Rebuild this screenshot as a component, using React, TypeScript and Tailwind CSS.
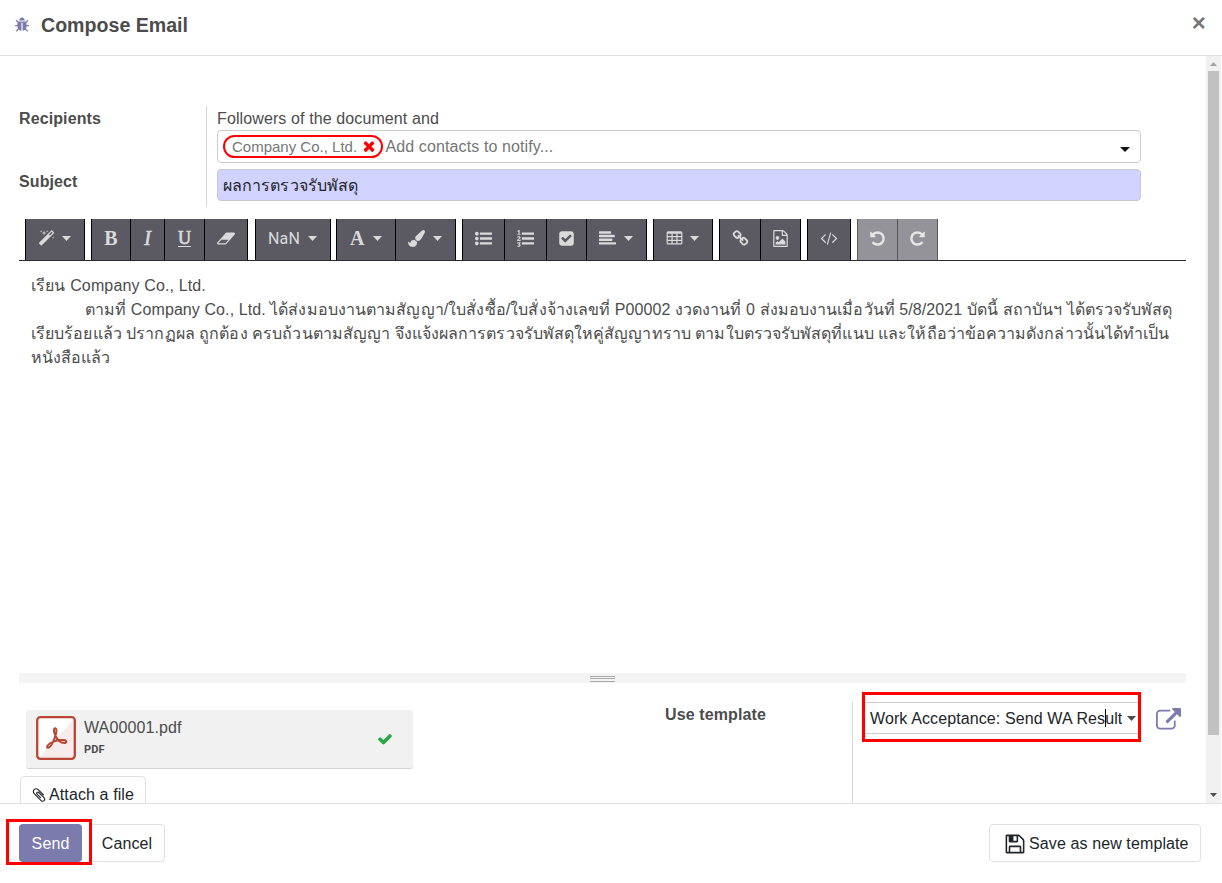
import type { ReactNode } from "react";

const PATHS = {
  bug: "M1696 960q0 26-19 45t-45 19h-224q0 171-67 290l208 209q19 19 19 45t-19 45q-18 19-45 19t-45-19l-198-197q-5 5-15 13t-42 28.5-65 36.5-82 29-97 13v-896h-128v896q-51 0-101.5-13.5t-87-33-66-39-43.5-32.5l-15-14-183 207q-20 21-48 21-24 0-43-16-19-18-20.5-44.5t15.5-46.5l202-227q-58-114-58-274h-224q-26 0-45-19t-19-45 19-45 45-19h224v-294l-173-173q-19-19-19-45t19-45 45-19 45 19l173 173h844l173-173q19-19 45-19t45 19 19 45-19 45l-173 173v294h224q26 0 45 19t19 45zm-480-576h-640q0-133 93.5-226.5t226.5-93.5 226.5 93.5 93.5 226.5z",
  magic: "M1254 581l293-293-107-107-293 293zm447-293q0 27-18 45l-1286 1286q-18 18-45 18t-45-18l-198-198q-18-18-18-45t18-45l1286-1286q18-18 45-18t45 18l198 198q18 18 18 45zm-1351-190l98 30-98 30-30 98-30-98-98-30 98-30 30-98zm350 162l196 60-196 60-60 196-60-196-196-60 196-60 60-196zm930 478l98 30-98 30-30 98-30-98-98-30 98-30 30-98zm-640-640l98 30-98 30-30 98-30-98-98-30 98-30 30-98z",
  eraser: "M896 1408l336-384h-768l-336 384h768zm1013-1077q15 34 9.5 71.5t-30.5 65.5l-896 1024q-38 44-96 44h-768q-38 0-69.5-20.5t-47.5-54.5q-15-34-9.5-71.5t30.5-65.5l896-1024q38-44 96-44h768q38 0 69.5 20.5t47.5 54.5z",
  brush: "M1615 0q70 0 122.5 46.5t52.5 116.5q0 63-45 151-332 629-465 752-97 91-218 91-126 0-216.5-92.5t-90.5-219.5q0-128 92-212l638-579q59-54 130-54zm-909 1034q39 76 106.5 130t150.5 76l1 71q4 213-129.5 347t-348.5 134q-123 0-218-46.5t-152.5-127.5-86.5-183-29-220q7 5 41 30t62 44.5 59 36.5 46 17q41 0 55-37 25-66 57.5-112.5t69.5-76 88-47.5 103-25.5 125-10.5z",
  listUl: "M384 1408q0 80-56 136t-136 56-136-56-56-136 56-136 136-56 136 56 56 136zm0-512q0 80-56 136t-136 56-136-56-56-136 56-136 136-56 136 56 56 136zm1408 416v192q0 13-9.5 22.5t-22.5 9.5h-1216q-13 0-22.5-9.5t-9.5-22.5v-192q0-13 9.5-22.5t22.5-9.5h1216q13 0 22.5 9.5t9.5 22.5zm-1408-928q0 80-56 136t-136 56-136-56-56-136 56-136 136-56 136 56 56 136zm1408 416v192q0 13-9.5 22.5t-22.5 9.5h-1216q-13 0-22.5-9.5t-9.5-22.5v-192q0-13 9.5-22.5t22.5-9.5h1216q13 0 22.5 9.5t9.5 22.5zm0-512v192q0 13-9.5 22.5t-22.5 9.5h-1216q-13 0-22.5-9.5t-9.5-22.5v-192q0-13 9.5-22.5t22.5-9.5h1216q13 0 22.5 9.5t9.5 22.5z",
  listOl: "M381 1620q0 80-54.5 126t-135.5 46q-106 0-172-66l57-88q49 45 106 45 29 0 50.5-14.5t21.5-42.5q0-64-105-56l-26-56q8-10 32.5-43.5t42.5-54 37-38.5v-1q-16 0-48.5 1t-48.5 1v53h-106v-152h333v88l-95 115q51 12 81 49t30 88zm2-627v159h-362q-6-36-6-54 0-51 23.5-93t56.5-68 66-47.5 56.5-43.5 23.5-45q0-25-14.5-38.5t-39.5-13.5q-46 0-81 58l-85-59q24-51 71.5-79.5t105.5-28.5q73 0 123 41.5t50 112.5q0 50-34 91.5t-75 64.5-75.5 50.5-35.5 52.5h127v-60h105zm1409 319v192q0 13-9.5 22.5t-22.5 9.5h-1216q-13 0-22.5-9.5t-9.5-22.5v-192q0-14 9-23t23-9h1216q13 0 22.5 9.5t9.5 22.5zm-1408-899v99h-335v-99h107q0-41 .5-121.5t.5-121.5v-12h-2q-8 17-50 54l-71-76 136-127h106v404h108zm1408 387v192q0 13-9.5 22.5t-22.5 9.5h-1216q-13 0-22.5-9.5t-9.5-22.5v-192q0-14 9-23t23-9h1216q13 0 22.5 9.5t9.5 22.5zm0-512v192q0 13-9.5 22.5t-22.5 9.5h-1216q-13 0-22.5-9.5t-9.5-22.5v-192q0-13 9.5-22.5t22.5-9.5h1216q13 0 22.5 9.5t9.5 22.5z",
  checkSquare: "M813 1299l614-614q19-19 19-45t-19-45l-102-102q-19-19-45-19t-45 19l-467 467-211-211q-19-19-45-19t-45 19l-102 102q-19 19-19 45t19 45l358 358q19 19 45 19t45-19zm851-883v960q0 119-84.5 203.5t-203.5 84.5h-960q-119 0-203.5-84.5t-84.5-203.5v-960q0-119 84.5-203.5t203.5-84.5h960q119 0 203.5 84.5t84.5 203.5z",
  alignLeft: "M1792 1344v128q0 26-19 45t-45 19h-1664q-26 0-45-19t-19-45v-128q0-26 19-45t45-19h1664q26 0 45 19t19 45zm-384-384v128q0 26-19 45t-45 19h-1280q-26 0-45-19t-19-45v-128q0-26 19-45t45-19h1280q26 0 45 19t19 45zm256-384v128q0 26-19 45t-45 19h-1536q-26 0-45-19t-19-45v-128q0-26 19-45t45-19h1536q26 0 45 19t19 45zm-384-384v128q0 26-19 45t-45 19h-1152q-26 0-45-19t-19-45v-128q0-26 19-45t45-19h1152q26 0 45 19t19 45z",
  table: "M224 128h1344q160 0 160 160v1088q0 160-160 160h-1344q-160 0-160-160v-1088q0-160 160-160zM192 384v256h384v-256zM704 384v256h384v-256zM1216 384v256h384v-256zM192 768v256h384v-256zM704 768v256h384v-256zM1216 768v256h384v-256zM192 1152v256h384v-256zM704 1152v256h384v-256zM1216 1152v256h384v-256z",
  link: "M1520 1216q0-40-28-68l-208-208q-28-28-68-28-42 0-72 32 3 3 19 18.5t21.5 21.5 15 19 13 25.5 3.5 27.5q0 40-28 68t-68 28q-15 0-27.5-3.5t-25.5-13-19-15-21.5-21.5-18.5-19q-33 31-33 73 0 40 28 68l206 207q27 27 68 27 40 0 68-26l147-146q28-28 28-67zm-703-705q0-40-28-68l-206-207q-28-28-68-28-39 0-68 27l-147 146q-28 28-28 67 0 40 28 68l208 208q27 27 68 27 42 0 72-31-3-3-19-18.5t-21.5-21.5-15-19-13-25.5-3.5-27.5q0-40 28-68t68-28q15 0 27.5 3.5t25.5 13 19 15 21.5 21.5 18.5 19q33-31 33-73zm895 705q0 120-85 203l-147 146q-83 83-203 83-121 0-204-85l-206-207q-83-83-83-203 0-123 88-209l-88-88q-86 88-208 88-120 0-204-84l-208-208q-84-84-84-204t85-203l147-146q83-83 203-83 121 0 204 85l206 207q83 83 83 203 0 123-88 209l88 88q86-88 208-88 120 0 204 84l208 208q84 84 84 204z",
  fileImage: "M1596 380q28 28 48 76t20 88v1152q0 40-28 68t-68 28h-1344q-40 0-68-28t-28-68v-1600q0-40 28-68t68-28h896q40 0 88 20t76 48zm-444-244v376h376q-10-29-22-41l-313-313q-12-12-41-22zm384 1528v-1024h-416q-40 0-68-28t-28-68v-416h-768v1536h1280zm-128-448v320h-1024v-192l192-192 128 128 384-384zm-832-192q-80 0-136-56t-56-136 56-136 136-56 136 56 56 136-56 136-136 56z",
  code: "M617 1399l-50 50q-10 10-23 10t-23-10l-466-466q-10-10-10-23t10-23l466-466q10-10 23-10t23 10l50 50q10 10 10 23t-10 23l-393 393 393 393q10 10 10 23t-10 23zm591-1067l-373 1291q-4 13-15.5 19.5t-23.5 2.5l-62-17q-13-4-19.5-15.5t-2.5-24.5l373-1291q4-13 15.5-19.5t23.5-2.5l62 17q13 4 19.5 15.5t2.5 24.5zm657 651l-466 466q-10 10-23 10t-23-10l-50-50q-10-10-10-23t10-23l393-393-393-393q-10-10-10-23t10-23l50-50q10-10 23-10t23 10l466 466q10 10 10 23t-10 23z",
  undo: "M1664 896q0 156-61 298t-164 245-245 164-298 61q-172 0-327-72.5t-264-204.5q-7-10-6.5-22.5t8.5-20.5l137-138q10-9 25-9 16 2 23 12 73 95 179 147t225 52q104 0 198.5-40.5t163.5-109.5 109.5-163.5 40.5-198.5-40.5-198.5-109.5-163.5-163.5-109.5-198.5-40.5q-98 0-188 35.5t-160 101.5l137 138q31 30 14 69-17 40-59 40h-448q-26 0-45-19t-19-45v-448q0-42 40-59 39-17 69 14l130 129q107-101 244.5-156.5t284.5-55.5q156 0 298 61t245 164 164 245 61 298z",
  save: "M512 1536h768v-384h-768v384zm896 0h128v-896q0-14-10-38.5t-20-34.5l-281-281q-10-10-34-20t-39-10v416q0 40-28 68t-68 28h-576q-40 0-68-28t-28-68v-416h-128v1280h128v-416q0-40 28-68t68-28h832q40 0 68 28t28 68v416zm-384-928v-320q0-13-9.5-22.5t-22.5-9.5h-192q-13 0-22.5 9.5t-9.5 22.5v320q0 13 9.5 22.5t22.5 9.5h192q13 0 22.5-9.5t9.5-22.5zm640 32v928q0 40-28 68t-68 28h-1344q-40 0-68-28t-28-68v-1344q0-40 28-68t68-28h928q40 0 88 20t76 48l280 280q28 28 48 76t20 88z",
  paperclip: "M1596 1385q0 117-79 196t-196 79q-135 0-235-100l-777-776q-113-115-113-271 0-159 110-270t269-111q158 0 273 113l605 606q10 10 10 22 0 16-30.5 46.5t-46.5 30.5q-13 0-23-10l-606-607q-79-77-181-77-106 0-179 75t-73 181q0 105 76 181l776 777q63 63 145 63 64 0 106-42t42-106q0-82-63-145l-581-581q-26-24-60-24-29 0-48 19t-19 48q0 32 25 59l410 410q10 10 10 22 0 16-31 47t-47 31q-12 0-22-10l-410-410q-63-61-63-149 0-82 57-139t139-57q88 0 149 63l581 581q100 98 100 235z",
  check: "M1671 566q0 40-28 68l-724 724-136 136q-28 28-68 28t-68-28l-136-136-362-362q-28-28-28-68t28-68l136-136q28-28 68-28t68 28l294 295 656-657q28-28 68-28t68 28l136 136q28 28 28 68z",
  times: "M1490 1322q0 40-28 68l-136 136q-28 28-68 28t-68-28l-294-294-294 294q-28 28-68 28t-68-28l-136-136q-28-28-28-68t28-68l294-294-294-294q-28-28-28-68t28-68l136-136q28-28 68-28t68 28l294 294 294-294q28-28 68-28t68 28l136 136q28 28 28 68t-28 68l-294 294 294 294q28 28 28 68z",
  external: "M1408 928v320q0 119-84.5 203.5t-203.5 84.5h-832q-119 0-203.5-84.5t-84.5-203.5v-832q0-119 84.5-203.5t203.5-84.5h704q14 0 23 9t9 23v64q0 14-9 23t-23 9h-704q-66 0-113 47t-47 113v832q0 66 47 113t113 47h832q66 0 113-47t47-113v-320q0-14 9-23t23-9h64q14 0 23 9t9 23zm384-864v512q0 26-19 45t-45 19-45-19l-176-176-652 652q-10 10-23 10t-23-10l-114-114q-10-10-10-23t10-23l652-652-176-176q-19-19-19-45t19-45 45-19h512q26 0 45 19t19 45z",
};

function Icon({ name, className = "size-4", wide = false }: { name: keyof typeof PATHS; className?: string; wide?: boolean }) {
  return (
    <svg viewBox={wide ? "0 0 1920 1792" : "0 0 1792 1792"} className={`shrink-0 ${className}`} fill="currentColor" fillRule={name === "table" ? "evenodd" : "nonzero"}>
      <path d={PATHS[name]} />
    </svg>
  );
}

function Caret({ className = "h-[5px] w-[9px]" }: { className?: string }) {
  return (
    <svg viewBox="0 0 10 5" preserveAspectRatio="none" className={`shrink-0 ${className}`} fill="currentColor">
      <path d="M0 0h10L5 5z" />
    </svg>
  );
}

function Group({ children, className = "" }: { children: ReactNode; className?: string }) {
  return <div className={`flex h-full border-r border-black ${className}`}>{children}</div>;
}

function Tool({ children, className }: { children: ReactNode; className: string }) {
  return (
    <button className={`flex h-full items-center border-l border-black bg-[#5b5a63] pb-[3px] text-[#dadada] ${className}`}>
      {children}
    </button>
  );
}

function Toolbar() {
  return (
    <div className="mt-3 ml-[19px] flex h-[42px] w-[1167px] border-b border-[#2b2a33] pl-[6px] tracking-normal">
      <Group className="mr-[6px]">
        <Tool className="w-[59px] gap-[7px] pl-3"><Icon name="magic" className="size-[17px]" /><Caret /></Tool>
      </Group>
      <Group className="mr-[7px] font-['Liberation_Serif',serif] text-[20px] leading-5">
        <Tool className="w-[39px] justify-center font-bold">B</Tool>
        <Tool className="w-[34px] justify-center italic [-webkit-text-stroke:0.6px_currentColor]">I</Tool>
        <Tool className="w-[40px] justify-center"><span className="mt-px border-b border-current text-[18px] leading-[15px] [-webkit-text-stroke:0.7px_currentColor]">U</span></Tool>
        <Tool className="w-[43px] justify-center"><Icon name="eraser" wide className="h-[17px] w-[18px]" /></Tool>
      </Group>
      <Group className="mr-[5px]">
        <Tool className="w-[75px] gap-[8px] pl-3"><span className="mt-[2px] font-['Roboto',sans-serif] text-[16px] tracking-[0.2px]">NaN</span><Caret /></Tool>
      </Group>
      <Group className="mr-[6px]">
        <Tool className="w-[59px] gap-[9px] pl-[13px]"><span className="font-['Liberation_Serif',serif] text-[20px] leading-5 font-bold">A</span><Caret /></Tool>
        <Tool className="w-[60px] gap-[8px] pl-3"><Icon name="brush" className="size-[17px]" /><Caret /></Tool>
      </Group>
      <Group className="mr-[6px]">
        <Tool className="w-[42px] justify-center"><Icon name="listUl" className="size-[17px]" /></Tool>
        <Tool className="w-[42px] justify-center"><Icon name="listOl" className="size-[17px]" /></Tool>
        <Tool className="w-[40px] justify-center"><Icon name="checkSquare" className="size-[17px]" /></Tool>
        <Tool className="w-[60px] gap-[8px] pl-3"><Icon name="alignLeft" className="size-[17px]" /><Caret /></Tool>
      </Group>
      <Group className="mr-[6px]">
        <Tool className="w-[59px] gap-[7px] pl-3"><Icon name="table" className="size-[17px]" /><Caret /></Tool>
      </Group>
      <Group className="mr-[6px]">
        <Tool className="w-[41px] justify-center"><Icon name="link" className="size-[17px]" /></Tool>
        <Tool className="w-[40px] justify-center"><Icon name="fileImage" className="size-[17px]" /></Tool>
      </Group>
      <Group className="mr-[6px]">
        <Tool className="w-[43px] justify-center"><Icon name="code" wide className="h-[16px] w-[18px]" /></Tool>
      </Group>
      <Group className="opacity-65">
        <Tool className="w-[40px] justify-center"><Icon name="undo" className="size-[17px]" /></Tool>
        <Tool className="w-[40px] justify-center"><Icon name="undo" className="size-[17px] -scale-x-100" /></Tool>
      </Group>
    </div>
  );
}

function Recipients() {
  return (
    <section className="flex pt-[50px] pl-[19px]">
      <div className="flex h-[101px] w-[188px] flex-col border-r border-[#d9d9d9] font-bold">
        <span className="mt-[1px] h-[63px]">Recipients</span>
        <span>Subject</span>
      </div>
      <div className="ml-[10px] w-[924px]">
        <div className="h-6 pt-px">Followers of the document and</div>
        <div className="flex h-[33px] items-center rounded-[4px] border border-[#ccc] pl-[5px]">
          <div className="flex h-[23px] w-[160px] items-center rounded-full border-2 border-[#f00] pl-[7px] text-[15px] tracking-normal text-[#777]">
            <span>Company Co., Ltd.</span>
            <Icon name="times" className="mb-px ml-[4px] size-[16px] text-[#f00]" />
          </div>
          <span className="ml-[2.5px] text-[#757575]">Add contacts to notify...</span>
          <Caret className="mt-[6px] mr-[10px] ml-auto h-[5px] w-[10px] text-[#111]" />
        </div>
        <div className="mt-[6px] flex h-8 items-center rounded-[4px] border border-[#c8c8d0] bg-[#d2d2ff] pt-[2px] pl-[5px] tracking-[0.08px] text-[#212529]">ผลการตรวจรับพัสดุ</div>
      </div>
    </section>
  );
}

function Message() {
  return (
    <div className="ml-[31px] h-[412px] pt-[13px] whitespace-nowrap">
      <p className="tracking-[0.14px]">เรียน Company Co., Ltd.</p>
      <p className="pl-[54px] tracking-[0.085px]">ตามที่ Company Co., Ltd. ได้ส่งมอบงานตามสัญญา/ใบสั่งซื้อ/ใบสั่งจ้างเลขที่ P00002 งวดงานที่ 0 ส่งมอบงานเมื่อวันที่ 5/8/2021 บัดนี้ สถาบันฯ ได้ตรวจรับพัสดุ</p>
      <p className="tracking-[0.073px]">เรียบร้อยแล้ว ปรากฏผล ถูกต้อง ครบถ้วนตามสัญญา จึงแจ้งผลการตรวจรับพัสดุใหคู่สัญญาทราบ ตามใบตรวจรับพัสดุที่แนบ และให้ถือว่าข้อความดังกล่าวนั้นได้ทำเป็น</p>
      <p className="tracking-[0.06px]">หนังสือแล้ว</p>
    </div>
  );
}

function PdfIcon() {
  return (
    <svg viewBox="0 0 40 44" className="h-[44px] w-[40px]">
      <rect x="1.2" y="1.2" width="37.6" height="41.6" rx="3" fill="#fff" />
      <path d="M38 3v39H3z" fill="#f7eceb" />
      <rect x="1.2" y="1.2" width="37.6" height="41.6" rx="3.2" fill="none" stroke="#b94534" strokeWidth="2.3" />
      <path d="M19.2 12.3c-2 0-1.5 4 .2 7.5 2 4.2 5.4 7.2 8.800 7.200 2.800 0 2.800-2.600-.5-2.900-4.500-.4-9.500.7-13.200 2.900-3.300 2-4.300 4.700-2.700 4.800 2.200 0 5.200-5.500 6.800-9.700 1.700-4.300 2.800-9.800.6-9.800z" fill="none" stroke="#b94534" strokeWidth="2" />
    </svg>
  );
}

function Bottom() {
  return (
    <section className="flex">
      <div className="w-[665px] pt-[27px] pl-[20px]">
        <div className="ml-[6px] flex h-[59px] w-[387px] rounded-[3px] border-b border-[#d3d3d3] bg-[#f1f1f1] pt-[6px] pl-[10px]">
          <PdfIcon />
          <div className="ml-2 flex w-[286px] flex-col">
            <span className="h-[25px] pt-px leading-[22px]">WA00001.pdf</span>
            <span className="font-['Roboto',sans-serif] text-[11px] leading-[18px] font-bold">PDF</span>
          </div>
          <Icon name="check" className="mt-[15px] ml-[7px] size-4 text-[#28a745]" />
        </div>
        <button className="mt-[7px] flex h-[38px] w-[126px] items-center rounded-[4px] border border-[#dee2e6] pl-[10px] text-[#212529]">
          <Icon name="paperclip" className="mr-[2px] mb-px size-4" />Attach a file
        </button>
      </div>
      <div className="mt-[19px] h-[140px] w-[188px] border-r border-[#d9d9d9] pt-px font-bold">Use template</div>
      <div className="relative mt-[19px] ml-[10px] flex h-8 w-[278px] items-center border-y border-[#ccc] pl-[7px] text-[#212529]">
        <span className="mt-[2px] w-[252px] overflow-hidden whitespace-nowrap">Work Acceptance: Send WA Result</span>
        <Caret className="ml-[5px] h-[5px] w-[9px] text-[#4c4c4c]" />
        <span className="absolute top-[6px] left-[242px] h-[18px] w-px bg-black" />
        <span className="absolute -top-[11px] -left-px h-[50px] w-[279px] border-[3px] border-[#f00]" />
      </div>
      <Icon name="external" className="mt-[25px] ml-[15px] size-[25px] text-[#7c7bad]" />
    </section>
  );
}

function Scrollbar() {
  return (
    <div className="mr-px flex w-[15px] flex-col items-center bg-[#f1f1f1]">
      <div className="flex h-[15px] items-center"><Caret className="h-[4px] w-[7px] rotate-180 text-[#a3a3a3]" /></div>
      <div className="h-[664px] w-[11px] bg-[#c1c1c1]" />
      <div className="mt-auto flex h-[17px] items-center"><Caret className="h-[4px] w-[7px] text-[#505050]" /></div>
    </div>
  );
}

export default function App() {
  return (
    <div className="flex h-[883px] w-[1222px] flex-col overflow-hidden bg-white font-['Liberation_Sans',sans-serif] text-[16px] leading-6 tracking-[0.11px] text-[#4c4c4c]">
      <header className="flex h-14 shrink-0 items-center border-b border-[#dee2e6] pb-[6px] pl-[13.5px]">
        <Icon name="bug" className="size-[16px] text-[#7c7bad]" />
        <h1 className="ml-[11.5px] text-[19.6px] font-bold tracking-normal">Compose Email</h1>
        <button className="mr-[16px] mb-[3px] ml-auto text-[24px] font-bold text-[#777]">×</button>
      </header>
      <main className="flex h-[747px] shrink-0 overflow-hidden">
        <div className="w-[1206px] shrink-0">
          <Recipients />
          <Toolbar />
          <Message />
          <div className="ml-[19px] flex h-[10px] w-[1167px] flex-col items-center bg-[#f4f4f4] pt-[3px]">
            <div className="h-[3px] w-[25px] border-y border-[#a9a9a9]" />
            <div className="mt-[2px] h-px w-[25px] bg-[#a9a9a9]" />
          </div>
          <Bottom />
        </div>
        <Scrollbar />
      </main>
      <footer className="relative flex grow items-start border-t border-[#dee2e6] pt-5 pr-[21px] pl-[19px] text-[#212529]">
        <button className="h-[38px] w-[63px] rounded-[4px] bg-[#7c7bad] pt-[2px] text-white">Send</button>
        <button className="ml-[7px] h-[38px] w-[76px] rounded-[4px] border border-[#dee2e6] pt-[2px]">Cancel</button>
        <button className="ml-auto flex h-[38px] w-[212px] items-center rounded-[4px] border border-[#dee2e6] pt-[2px] pl-[14px]">
          <Icon name="save" className="mr-[3px] size-[22px]" />Save as new template
        </button>
        <span className="absolute top-[15px] left-[6px] h-[46px] w-[86px] border-[3px] border-[#f00]" />
      </footer>
    </div>
  );
}
